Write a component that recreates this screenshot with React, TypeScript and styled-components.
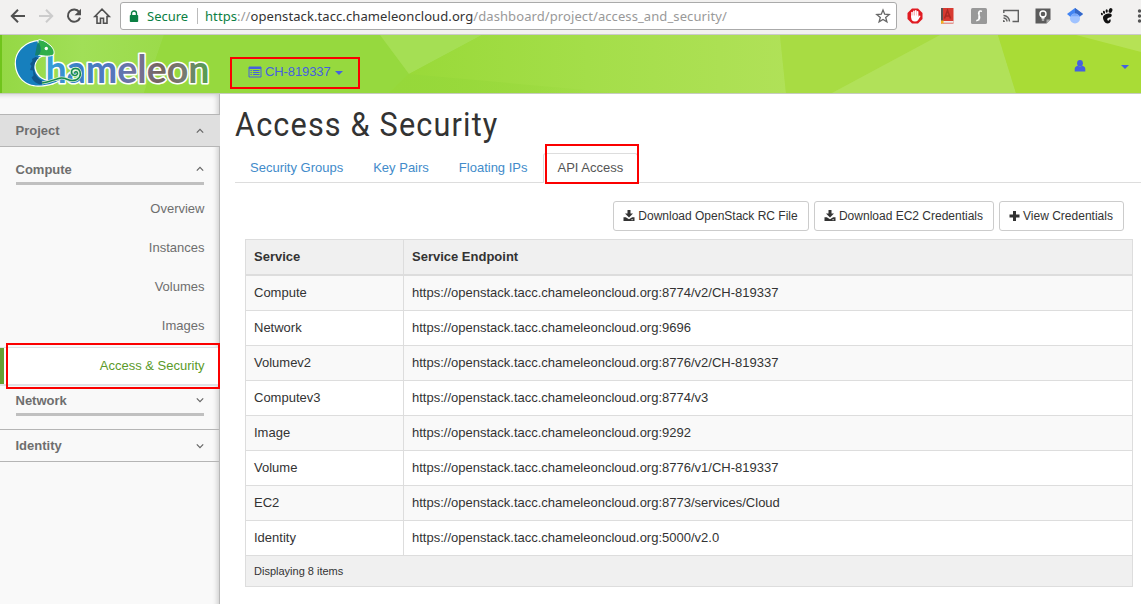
import React from 'react';
import styled, { createGlobalStyle } from 'styled-components';

const GlobalStyle = createGlobalStyle`
  * { box-sizing: border-box; }
  body { margin: 0; background: #fff; color: #333; font: 13px/18px "Liberation Sans", Arial, sans-serif; overflow: hidden; }
  a { text-decoration: none; color: inherit; }
  svg { display: block; flex: none; }
`;

const Page = styled.div`
  position: relative;
  width: 1141px;
  height: 604px;
  display: flex;
  flex-direction: column;
  overflow: hidden;
`;

const BrowserBar = styled.div`
  height: 35px;
  flex: none;
  display: flex;
  align-items: center;
  background: #f2f1f0;
  border-bottom: 1px solid #cbc9cb;
  padding: 0 0 3px 8px;
`;
const NavIcons = styled.div`
  display: flex;
  flex: none;
  gap: 8px;
  width: 112px;
`;
const AddressBar = styled.div`
  width: 777px;
  flex: none;
  height: 28px;
  margin-top: 1px;
  display: flex;
  align-items: center;
  background: #fff;
  border: 1px solid #aaa;
  border-radius: 3px;
  padding: 0 5px 0 8px;
  font: 13px/20px "Noto Sans", sans-serif;
`;
const Secure = styled.span`
  color: #0b8043;
  width: 51px;
  padding-left: 8px;
  margin-right: 3px;
  white-space: nowrap;
`;
const Separator = styled.span`
  width: 1px;
  height: 16px;
  background: #bbb;
  margin: 0 7px 0 4px;
`;
const Address = styled.span`
  flex: 1;
  color: #999;
  white-space: nowrap;
  letter-spacing: 0.09px;
  b { font-weight: 400; color: #333; }
  i { font-style: normal; color: #0b8043; }
`;
const Extensions = styled.div`
  display: flex;
  flex: none;
  align-items: center;
  gap: 16px;
  padding-left: 10px;
`;

const Header = styled.header`
  position: relative;
  height: 59px;
  flex: none;
  display: flex;
  align-items: center;
  border-bottom: 1px solid #c6ccbf;
  color: #4560e0;
`;
const Backdrop = styled.svg`
  position: absolute;
  inset: 0;
  z-index: -1;
`;
const LogoSlot = styled.div`
  width: 248px;
  padding-left: 12px;
`;
const ProjectPicker = styled.a`
  display: flex;
  align-items: center;
  flex: 1;
  padding-top: 16px;
  span { margin: 0 4px 0 3px; letter-spacing: -0.1px; }
`;
const UserMenu = styled.a`
  display: flex;
  align-items: center;
  gap: 35px;
  padding: 3px 12px 0 0;
`;
const Caret = styled.i<{ $top?: number }>`
  border: 4px solid transparent;
  border-top-color: currentColor;
  border-bottom: 0;
  margin-top: ${p => p.$top ?? 0}px;
`;

const Body = styled.div`
  flex: 1;
  display: flex;
`;
const Sidebar = styled.nav`
  width: 220px;
  flex: none;
  padding-top: 20px;
  color: #6e6e6e;
  background: #f9f9f9;
  border-right: 1px solid #b9b9b9;
  box-shadow: inset -4px 3px 5px -2px rgba(0, 0, 0, 0.16);
`;
const PanelHeading = styled.div<{ $open?: boolean }>`
  height: 33px;
  margin-right: ${p => (p.$open ? -1 : 0)}px;
  display: flex;
  align-items: center;
  justify-content: space-between;
  padding: 0 ${p => (p.$open ? 16 : 15)}px 0 15.5px;
  font-weight: 700;
  background: ${p => (p.$open ? '#dfdfdf' : 'transparent')};
  border: solid #b5b5b5;
  border-width: 1px 0;
`;
const GroupHeading = styled.div<{ $top: number }>`
  margin: ${p => p.$top}px 15px 0 16px;
  height: 24px;
  display: flex;
  align-items: flex-start;
  justify-content: space-between;
  font-weight: 700;
  text-indent: -0.5px;
  border-bottom: 3px solid #c0c0c0;
  svg { margin-top: 4px; }
`;
const LinkList = styled.div`
  padding-top: 4px;
`;
const SideLink = styled.a<{ $active?: boolean }>`
  display: flex;
  align-items: center;
  justify-content: flex-end;
  height: 39px;
  padding-right: 14.5px;
  ${p => p.$active && `
    margin-top: 2px;
    color: #5b9a2a;
    background: #fff;
    border: solid #dfe2e6;
    border-width: 1px 0 2px;
    box-shadow: inset 4px 0 0 #67a033;
  `}
`;

const Main = styled.main`
  flex: 1;
  padding: 10px 0 0 15px;
`;
const Title = styled.h1`
  margin: 0;
  height: 49px;
  font: 400 34px/41px Roboto, sans-serif;
  letter-spacing: 1.3px;
  transform: scaleX(0.9);
  transform-origin: 0 0;
  color: #333;
`;
const Tabs = styled.div`
  display: flex;
  height: 30px;
  border-bottom: 1px solid #ddd;
`;
const Tab = styled.a<{ $active?: boolean }>`
  padding: 6px 15px 0;
  color: #428bca;
  ${p => p.$active && `
    height: 30px;
    padding: 5px 14px 0 14px;
    color: #555;
    background: #fff;
    border: 1px solid #ddd;
    border-bottom: 0;
    border-radius: 3px 3px 0 0;
  `}
`;
const Actions = styled.div`
  display: flex;
  justify-content: flex-end;
  gap: 5px;
  padding: 18px 17px 8px 0;
`;
const Button = styled.button<{ $width: number }>`
  width: ${p => p.$width}px;
  height: 30px;
  display: flex;
  align-items: center;
  justify-content: center;
  gap: 3px;
  padding: 0 1px 0 0;
  white-space: nowrap;
  background: #fff;
  border: 1px solid #ccc;
  border-radius: 3px;
  color: #333;
  font: 12px/18px "Liberation Sans", Arial, sans-serif;
`;
const Table = styled.div`
  width: 888px;
  margin-left: 10px;
  border: 1px solid #ddd;
`;
const Row = styled.div<{ $odd?: boolean; $head?: boolean }>`
  display: grid;
  grid-template-columns: 158px 1fr;
  height: ${p => (p.$head ? 36 : 35)}px;
  font-weight: ${p => (p.$head ? 700 : 400)};
  background: ${p => (p.$head ? '#f0f0f0' : p.$odd ? '#f9f9f9' : '#fff')};
  border-bottom: ${p => (p.$head ? 2 : 1)}px solid #ddd;
`;
const Cell = styled.div`
  padding: 8px;
  &:first-child { border-right: 1px solid #ddd; }
`;
const TableFooter = styled.div`
  height: 30px;
  padding: 6px 8px;
  font-size: 11px;
  background: #f0f0f0;
`;
const Highlight = styled.div<{ $x: number; $y: number; $w: number; $h: number }>`
  position: absolute;
  left: ${p => p.$x}px;
  top: ${p => p.$y}px;
  width: ${p => p.$w}px;
  height: ${p => p.$h}px;
  border: 2px solid #fb0000;
  pointer-events: none;
`;

const Chevron = ({ up }: { up?: boolean }) => (
  <svg width="8" height="8" viewBox="0 0 8 8" fill="none" stroke="#666" strokeWidth="1.2">
    <path d={up ? 'M.8 5.6 4 2.4 7.2 5.6' : 'M.8 2.4 4 5.6 7.2 2.4'} />
  </svg>
);

const SaveIcon = () => (
  <svg width="12" height="12" viewBox="0 0 12 12" fill="#333">
    <path d="M4.500 0h3v3.500H10L6 7.500 2 3.500h2.500z" />
    <path d="M.5 7.200h2.300L6 9.200l3.200-2h2.300v3.800H.5z" />
    <path d="M8.300 9.700h1.800" stroke="#fff" strokeWidth=".7" />
  </svg>
);
const PlusIcon = () => (
  <svg width="11" height="12" viewBox="0 0 11 12" fill="#333">
    <path d="M4 1h3v3.500h3.500v3H7V11H4V7.500H.5v-3H4z" />
  </svg>
);

const Nav = () => (
  <NavIcons>
    <svg width="20" height="20" viewBox="0 0 20 20" fill="none" stroke="#505050" strokeWidth="2">
      <path d="M17 10H4M10 3.800 3.800 10l6.200 6.200" />
    </svg>
    <svg width="20" height="20" viewBox="0 0 20 20" fill="none" stroke="#ccc" strokeWidth="2">
      <path d="M3 10h13M10 3.800 16.200 10 10 16.200" />
    </svg>
    <svg width="20" height="20" viewBox="0 0 20 20" fill="none" stroke="#505050" strokeWidth="2">
      <path d="M15.200 6A6.200 6.200 0 1 0 16 11.600" />
      <path d="M17 2.800v6.400h-6.400z" fill="#505050" stroke="none" />
    </svg>
    <svg width="20" height="20" viewBox="0 0 20 20" fill="none" stroke="#505050" strokeWidth="1.600">
      <path d="M2.800 10.500 10 3.200l7.200 7.300H15v6.700h-3.500v-5h-3v5H5v-6.700z" />
    </svg>
  </NavIcons>
);

const ExtensionIcons = () => (
  <Extensions>
    <svg width="16" height="16" viewBox="0 0 16 16">
      <path d="M5 .5h6L15.500 5v6L11 15.500H5L.5 11V5z" fill="#e01b22" />
      <path d="M5 9V4.500M6.900 8V3.200M8.800 8V2.800M10.600 8V3.800" stroke="#fff" strokeWidth="1.600" strokeLinecap="round" />
      <path d="M4.200 7.500h7.200v1.200l1.200-1.200 1 .6-2.600 4.200q-1 1.300-3 1.300-3.800 0-3.800-4z" fill="#fff" />
    </svg>
    <svg width="16" height="16" viewBox="0 0 16 16">
      <path d="M2 0h12.500v15.500H2z" fill="#d83a31" />
      <path d="M2 0h2v14H2z" fill="#555" />
      <path d="M3.500 13h11v1.800h-11z" fill="#eee" />
      <path d="m5.500 10.500 3-8 3 8M6.500 8h4" fill="none" stroke="#a92923" strokeWidth="1.500" />
      <path d="M2 12.500h2.500V16l-1.200-1L2 16z" fill="#f3b51b" />
    </svg>
    <svg width="16" height="16" viewBox="0 0 16 16">
      <rect width="16" height="16" rx="1.500" fill="#999" />
      <path d="M11 3.300C8 2.300 6.800 4.500 8 7s1 5-2.700 5.700M8.200 3.500l-.4 9" fill="none" stroke="#fff" strokeWidth="1.400" />
    </svg>
    <svg width="16" height="16" viewBox="0 0 16 16" fill="none" stroke="#606060" strokeWidth="1.400">
      <path d="M.8 5V2.500h14.500v11H9.500M.5 7.500a6 6 0 0 1 6 6M.5 10A3.500 3.500 0 0 1 4 13.500" />
      <path d="M0 12a2 2 0 0 1 2 2H0z" fill="#606060" stroke="none" />
    </svg>
    <svg width="16" height="16" viewBox="0 0 16 16">
      <path d="M.5.5h15v11l-4 4H.5z" fill="#5c5c5c" />
      <path d="M11.500 15.500v-4h4z" fill="#aaa" />
      <circle cx="8" cy="6" r="3" fill="none" stroke="#fff" strokeWidth="1.400" />
      <path d="M6.500 8.500h3v2.300h-3zM6.800 11.400h2.400v1H6.800z" fill="#fff" />
    </svg>
    <svg width="16" height="16" viewBox="0 0 16 16">
      <path d="M8 0 0 6l3.500 3h9L16 6z" fill="#4285f4" />
      <path d="m8 0 8 6-2 1.500H8z" fill="#3567c6" />
      <circle cx="8" cy="10.500" r="5" fill="#a0c3ff" />
      <path d="M3.600 8.300a5 5 0 0 1 8.800 0z" fill="#77a7fb" />
    </svg>
    <svg width="16" height="16" viewBox="0 0 16 16" fill="#111">
      <ellipse cx="11.500" cy="2.500" rx="1.800" ry="2.500" transform="rotate(20 11.500 2.500)" />
      <ellipse cx="7.700" cy="3" rx="1.100" ry="1.800" />
      <ellipse cx="5" cy="4.300" rx="1" ry="1.600" transform="rotate(-15 5 4.300)" />
      <ellipse cx="2.900" cy="6" rx=".9" ry="1.300" transform="rotate(-25 2.900 6)" />
      <path d="M12.800 7c0-3-8.800-1.500-8.800 2.500C4 12 6 15.500 8.500 15.500c1.800 0 3.200-1 3.200-3 0-1.600-1.200-1.700-1.500-.6-.4 1.200-2 1-2-.6 0-2 4.600-1.300 4.600-4.300z" />
    </svg>
    <svg width="10" height="16" viewBox="0 0 10 16" fill="#555">
      <circle cx="8.500" cy="3" r="1.700" /><circle cx="8.500" cy="8" r="1.700" /><circle cx="8.500" cy="13" r="1.700" />
    </svg>
  </Extensions>
);

const Facets = () => (
  <Backdrop width="1141" height="58" viewBox="0 0 1141 58">
    <defs>
      <linearGradient id="base">
        <stop offset="0" stopColor="#96da42" /><stop offset=".4" stopColor="#98d93a" />
        <stop offset=".62" stopColor="#aadf4f" /><stop offset="1" stopColor="#a9dc36" />
      </linearGradient>
      <linearGradient id="left"><stop offset="0" stopColor="#94d844" /><stop offset=".5" stopColor="#a1df57" /><stop offset="1" stopColor="#9bdb4a" /></linearGradient>
      <linearGradient id="mid"><stop offset="0" stopColor="#98d937" /><stop offset=".5" stopColor="#a4de49" /><stop offset="1" stopColor="#b0e158" /></linearGradient>
      <linearGradient id="low"><stop offset="0" stopColor="#96d83a" /><stop offset="1" stopColor="#96d83a" stopOpacity="0" /></linearGradient>
    </defs>
    <path d="M0 0h1141v58H0z" fill="url(#base)" />
    <path d="M0 0h164l-20 58H0z" fill="url(#left)" />
    <path d="M0 0h2v58H0z" fill="#70c41b" />
    <path d="M164 0h216l29 39-20 19H144z" fill="#96d93e" />
    <path d="M380 0h102l-73 39z" fill="#a5df54" />
    <path d="M482 0h298l6 58H389l20-19z" fill="url(#mid)" />
    <path d="M409 39 620 58H389z" fill="url(#low)" />
    <path d="M780 0h160L832 58h-46z" fill="#a8dc43" />
    <path d="M940 0h58l18 58H832z" fill="#b1e159" />
    <path d="M998 0h80l63 17v41h-125z" fill="#a9dc36" />
    <path d="M1076 0h65v17z" fill="#b6e255" />
  </Backdrop>
);

const bodyShape = 'M40 41C25 42 15.500 52 16 64c.5 13 10 21.500 22 21.500 9 0 16-2.500 22-5.500-8 2-16 1.500-21-3-5-5-6-12-3-16.500 2-3.500 5-5 9-5.500z';
const tailShape = 'M42 83c8-1 13-4 19-5 5-.5 7 3 12 2.500 6-.5 8.500-5 7-9-1.500-4-8-4-8.500.5 0 4 5.500 4.500 6 1.500 0-2-2.500-2.500-2.800-.5';

const Logo = () => (
  <svg width="204" height="56" viewBox="12 36 204 56">
    <defs>
      <linearGradient id="word" gradientUnits="userSpaceOnUse" x1="45" x2="210" y1="0" y2="0">
        <stop offset="0" stopColor="#35a3dc" /><stop offset=".2" stopColor="#3d7fc4" />
        <stop offset=".4" stopColor="#5376bd" /><stop offset=".56" stopColor="#76729a" />
        <stop offset=".69" stopColor="#75655f" /><stop offset=".84" stopColor="#777a72" />
        <stop offset="1" stopColor="#53a34c" />
      </linearGradient>
    </defs>
    <path d={bodyShape} fill="#167fbd" stroke="#fff" strokeWidth="2.600" strokeLinejoin="round" />
    <text x="45.500" y="82.500" textLength="164" lengthAdjust="spacingAndGlyphs" fontFamily="Lato, sans-serif" fontWeight="700" fontSize="37.500" fill="url(#word)" stroke="#fff" strokeWidth="3.200" strokeLinejoin="round" paintOrder="stroke">hameleon</text>
    <path d={bodyShape} fill="#167fbd" />
    <path d="m35.500 57-3.500 2 .5 2-2.500 3 1.500 2-1.500 4 3 .5.5 5-2 2c2 4 5 6 8.500 7l5-2.500c-7-2-11-8-11-14 0-4 2-8 5-10z" fill="#11588c" />
    <path d="M38 41c0-1 1-1.500 2-1.200 5 .5 8 4 11 6.200 2.500 3 4 6 2.500 9-5 2-10 1-15.500 0z" fill="#2fae4a" stroke="#fff" strokeWidth="1" />
    <path d="M37.500 42c4 3 4 9 1.500 13l-4 .5z" fill="#14806f" />
    <circle cx="46.300" cy="48.500" r="1.700" fill="#fff" />
    <path d={tailShape} fill="none" stroke="#d5efd0" strokeWidth="3" />
    <path d={tailShape} fill="none" stroke="#168b4f" strokeWidth="1.500" />
  </svg>
);

const services: [string, string][] = [
  ['Compute', '8774/v2/CH-819337'],
  ['Network', '9696'],
  ['Volumev2', '8776/v2/CH-819337'],
  ['Computev3', '8774/v3'],
  ['Image', '9292'],
  ['Volume', '8776/v1/CH-819337'],
  ['EC2', '8773/services/Cloud'],
  ['Identity', '5000/v2.0'],
];

export default function App() {
  return (
    <Page>
      <GlobalStyle />
      <BrowserBar>
        <Nav />
        <AddressBar>
          <svg width="10" height="13" viewBox="0 0 10 13">
            <path d="M2.500 6V3.500a2.500 2.500 0 0 1 5 0V6" fill="none" stroke="#0b8043" strokeWidth="1.400" />
            <rect x=".8" y="5" width="8.400" height="7" rx=".8" fill="#0b8043" />
          </svg>
          <Secure>Secure</Secure>
          <Separator />
          <Address><i>https</i>://<b>openstack.tacc.chameleoncloud.org</b>/dashboard/project/access_and_security/</Address>
          <svg width="16" height="16" viewBox="0 0 16 16" fill="none" stroke="#666" strokeWidth="1.300">
            <path d="m8 2 1.700 4.200 4.500.3-3.500 2.900 1.200 4.400L8 11.400l-3.900 2.400 1.200-4.400-3.500-2.900 4.500-.3z" />
          </svg>
        </AddressBar>
        <ExtensionIcons />
      </BrowserBar>
      <Header>
        <Facets />
        <LogoSlot><Logo /></LogoSlot>
        <ProjectPicker>
          <svg width="14" height="12" viewBox="0 0 14 12">
            <path d="M1 1h12v10H1z" fill="none" stroke="currentColor" />
            <path d="M1 1h12v2H1z" fill="currentColor" />
            <path d="M2.500 4.500h1.300M5 4.500h6.500M2.500 6.500h1.300M5 6.500h6.500M2.500 8.500h1.300M5 8.500h6.500" stroke="currentColor" />
          </svg>
          <span>CH-819337</span>
          <Caret $top={2} />
        </ProjectPicker>
        <UserMenu>
          <svg width="12" height="12" viewBox="0 0 12 12" fill="currentColor">
            <ellipse cx="6" cy="3.300" rx="2.900" ry="3.200" />
            <path d="M.7 11.500V9q0-2.500 3-3.200 2.300 1.500 4.600 0 3 .7 3 3.200v2.500z" />
          </svg>
          <Caret $top={2} />
        </UserMenu>
      </Header>
      <Body>
        <Sidebar>
          <PanelHeading $open>Project<Chevron up /></PanelHeading>
          <GroupHeading $top={14}>Compute<Chevron up /></GroupHeading>
          <LinkList>
            <SideLink>Overview</SideLink>
            <SideLink>Instances</SideLink>
            <SideLink>Volumes</SideLink>
            <SideLink>Images</SideLink>
            <SideLink $active>Access &amp; Security</SideLink>
          </LinkList>
          <GroupHeading $top={6}>Network<Chevron /></GroupHeading>
          <LinkList />
          <LinkList />
          <LinkList />
          <GroupEnd />
          <PanelHeading>Identity<Chevron /></PanelHeading>
        </Sidebar>
        <Main>
          <Title>Access &amp; Security</Title>
          <Tabs>
            <Tab>Security Groups</Tab>
            <Tab>Key Pairs</Tab>
            <Tab>Floating IPs</Tab>
            <Tab $active>API Access</Tab>
          </Tabs>
          <Actions>
            <Button $width={196}><SaveIcon />Download OpenStack RC File</Button>
            <Button $width={180}><SaveIcon />Download EC2 Credentials</Button>
            <Button $width={125}><PlusIcon />View Credentials</Button>
          </Actions>
          <Table>
            <Row $head><Cell>Service</Cell><Cell>Service Endpoint</Cell></Row>
            {services.map(([name, path], i) => (
              <Row key={name} $odd={i % 2 === 0}>
                <Cell>{name}</Cell>
                <Cell>https://openstack.tacc.chameleoncloud.org:{path}</Cell>
              </Row>
            ))}
            <TableFooter>Displaying 8 items</TableFooter>
          </Table>
        </Main>
      </Body>
      <Highlight $x={230} $y={57} $w={130} $h={32} />
      <Highlight $x={545} $y={144} $w={94} $h={40} />
      <Highlight $x={6} $y={343} $w={214} $h={46} />
    </Page>
  );
}

const GroupEnd = styled.div`
  height: 1px;
`;
